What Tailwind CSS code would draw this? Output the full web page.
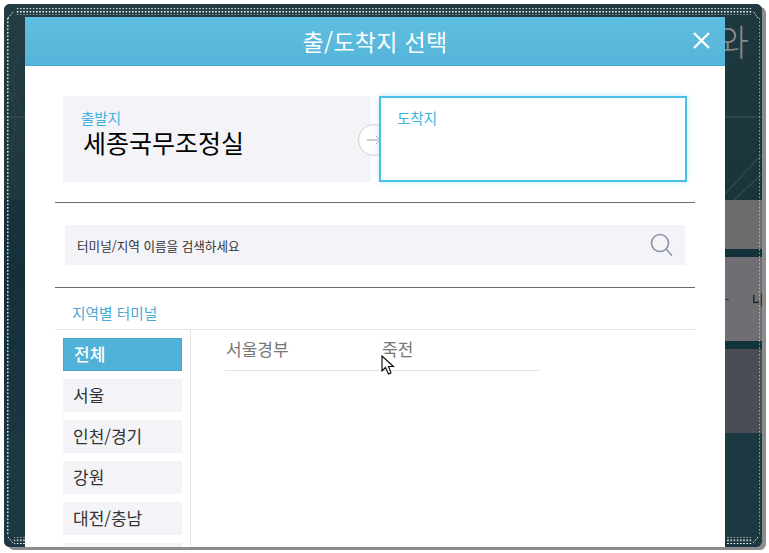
<!DOCTYPE html>
<html lang="ko">
<head>
<meta charset="utf-8">
<script src="https://cdn.jsdelivr.net/npm/@tailwindcss/browser@4"></script>
</head>
<body class="bg-white overflow-hidden font-['Noto_Sans_CJK_KR','Noto_Sans',sans-serif]">
<div class="w-[769px] h-[553px] pt-1 pl-1 bg-white">
  <div class="relative w-[758px] h-[543px] overflow-hidden rounded-[6px] shadow-[4px_3px_0_0_#8c8c8c] bg-gradient-to-b from-[#1f3a42] via-[#16303a] to-[#1d3a44]">
    <!-- page behind the modal -->
    <div class="h-full flex flex-col">
      <div class="h-[196px] bg-gradient-to-br from-[#243d44] to-[#1a343c] border-0"></div>
      <div class="ml-[100px] h-[49px] shrink-0 bg-[#6b6c6b]"></div>
      <div class="h-[8px] shrink-0 bg-[#12333b]"></div>
      <div class="ml-[100px] h-[84px] shrink-0 bg-[#706e72] flex items-center justify-between">
        <span class="ml-[621px] text-[12px] leading-none text-[#222]">-</span>
        <span class="text-[14px] leading-none text-[#111] mr-[-8px] w-[18px]">나</span>
      </div>
      <div class="h-[8px] shrink-0 bg-[#12333b]"></div>
      <div class="ml-[100px] h-[84px] shrink-0 bg-[#4b4d55]"></div>
      <div class="flex-1 bg-[#1c3841]"></div>
    </div>
    <span class="absolute left-[712px] top-[14px] text-[36px] leading-[44px] font-light text-[#8a8a88] whitespace-nowrap">와 대</span>
    <svg class="absolute inset-0" width="758" height="543" fill="none">
      <path d="M721 190 L758 150 M730 196 L758 170" stroke="#29444c" stroke-width="2"/>
      <path d="M0 113 H21 M721 113 H758" stroke="#3d575d"/>
      <path d="M2 80 C14 100 14 130 4 150 M16 50 C4 70 8 90 20 110" stroke="#2a454d"/>
    </svg>
    <!-- dotted frame -->
    <svg class="absolute inset-0" width="758" height="543">
      <defs>
        <pattern id="dots" width="3.2" height="3.5" patternUnits="userSpaceOnUse"><rect width="1.5" height="1.5" fill="#fff"/></pattern>
      </defs>
      <rect x="12" y="4" width="736" height="7" fill="url(#dots)"/>
      <rect x="3" y="14" width="1.6" height="518" fill="url(#dots)"/>
      <rect x="754" y="14" width="1.6" height="518" fill="url(#dots)"/>
      <rect x="10" y="533" width="12" height="7" fill="url(#dots)"/>
      <rect x="722" y="533" width="26" height="7" fill="url(#dots)"/>
      <path d="M4 14 L10 7 M754 14 L749 7 M4 533 L9 539 M754 533 L749 539" stroke="#fff" stroke-dasharray="1.5 1.5"/>
    </svg>
    <!-- modal -->
    <div class="absolute left-[21px] top-[13px] w-[700px] h-[530px] bg-white overflow-hidden">
      <header class="relative h-[49px] border-b border-[#4aabd0] bg-gradient-to-b from-[#5fbfe0] to-[#55b4d9] flex items-center justify-center">
        <h1 class="text-[23px] leading-none font-normal text-white tracking-[0.3px]">출/도착지 선택</h1>
        <svg class="absolute right-[15px] top-[15px]" width="17" height="17" viewBox="0 0 17 17" stroke="#fff" stroke-width="2.4" fill="none"><path d="M1 1 L16 16 M16 1 L1 16"/></svg>
      </header>
      <div class="px-[30px]">
        <div class="relative flex gap-2 pl-2 pr-2 mt-[30px]">
          <div class="w-[308px] h-[86px] bg-[#f4f3f8] pl-[18px] pt-[13px]">
            <p class="text-[14.5px] leading-[17px] text-[#3db2de]">출발지</p>
            <p class="text-[25px] leading-[32px] text-black pl-[2px]">세종국무조정실</p>
          </div>
          <div class="absolute left-[303px] top-[28px] w-8 h-8 rounded-full bg-white border border-[#cfcfcf] flex items-center pl-[8px]">
            <svg width="14" height="10" viewBox="0 0 14 10" fill="none" stroke="#999"><path d="M0 5 H13 M9 1 L13 5 L9 9"/></svg>
          </div>
          <div class="relative w-[308px] h-[86px] bg-white border-2 border-[#45c1e6] shadow-[0_0_6px_#bfeaf6] pl-[16px] pt-[11px]">
            <p class="text-[14.5px] leading-[17px] text-[#3db2de]">도착지</p>
          </div>
        </div>
        <div class="mt-5 border-t border-[#6b6b6b]"></div>
        <div class="mx-[10px] mt-[22px] h-10 bg-[#f4f3f8] flex items-center justify-between pl-3 pr-[11px]">
          <span class="text-[12.6px] leading-none text-[#333] mt-[3px]">터미널/지역 이름을 검색하세요</span>
          <svg width="24" height="24" viewBox="0 0 24 24" fill="none" stroke="#8b93a8" stroke-width="1.6"><circle cx="10" cy="10" r="8.5"/><path d="M16 16 L22 22.5"/></svg>
        </div>
        <div class="mt-[22px] border-t border-[#6b6b6b]"></div>
        <h2 class="h-[42px] pl-[17px] pt-[15px] text-[14.7px] leading-[20px] font-normal text-[#4aa8d4] border-b border-[#e2e2e2]">지역별 터미널</h2>
        <div class="flex">
          <ul class="w-[136px] shrink-0 border-r border-[#e2e2e2] pl-2 pt-2 flex flex-col gap-2 h-[300px] text-[17px] text-[#333]">
            <li class="w-[119px] h-[33px] shrink-0 pl-[10px] pb-[2px] flex items-center bg-[#50b2d8] border border-[#45a5cc] text-white font-medium">전체</li>
            <li class="w-[119px] h-[33px] shrink-0 pl-[10px] pb-[2px] flex items-center bg-[#f4f3f8]">서울</li>
            <li class="w-[119px] h-[33px] shrink-0 pl-[10px] pb-[2px] flex items-center bg-[#f4f3f8]">인천/경기</li>
            <li class="w-[119px] h-[33px] shrink-0 pl-[10px] pb-[2px] flex items-center bg-[#f4f3f8]">강원</li>
            <li class="w-[119px] h-[33px] shrink-0 pl-[10px] pb-[2px] flex items-center bg-[#f4f3f8]">대전/충남</li>
            <li class="w-[119px] h-[33px] shrink-0 bg-[#f4f3f8]"></li>
          </ul>
          <div class="pl-[34px]">
            <div class="flex w-[314px] h-[41px] border-b border-[#e2e2e2] text-[17px] text-[#777] items-center">
              <span class="w-[157px] pl-px pb-[2px]">서울경부</span>
              <span class="w-[157px] pb-[2px]">죽전</span>
            </div>
          </div>
        </div>
      </div>
      <svg class="absolute left-[356px] top-[338px]" width="14" height="20" viewBox="0 0 14 20"><path d="M1 1 V16 L4.5 12.5 L7.5 19 L10 18 L7.5 11.5 L12.5 11.5 Z" fill="#fff" stroke="#000" stroke-width="1.1"/></svg>
    </div>
  </div>
</div>
</body>
</html>
